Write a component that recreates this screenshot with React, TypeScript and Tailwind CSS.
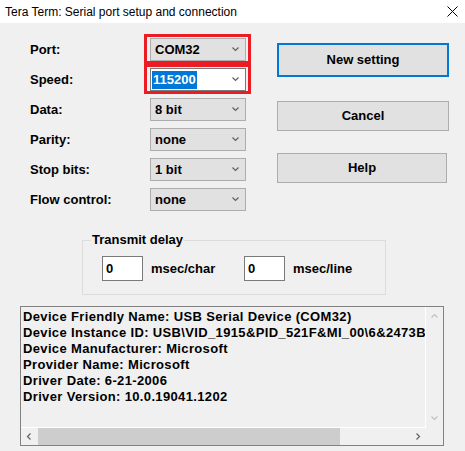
import React from 'react'

const font = { fontFamily: '"Liberation Sans", Arial, sans-serif' }

const Chevron: React.FC<{ dir?: 'down' | 'up' | 'left' | 'right'; color?: string }> = ({ dir = 'down', color = '#606060' }) => {
  const paths: Record<string, string> = {
    down: 'M0.5 1.5 L3.5 4.5 L6.5 1.5',
    up: 'M0.5 4.5 L3.5 1.5 L6.5 4.5',
    left: 'M4.5 0.5 L1.5 3.5 L4.5 6.5',
    right: 'M2.5 0.5 L5.5 3.5 L2.5 6.5',
  }
  return (
    <svg width="7" height="7" viewBox="0 0 7 7" className="shrink-0">
      <path d={paths[dir]} fill="none" stroke={color} strokeWidth="1.2" />
    </svg>
  )
}

interface ComboProps {
  value: string
  selected?: boolean
  marked?: boolean
}

const Combo: React.FC<ComboProps> = ({ value, selected, marked }) => (
  <div className="relative">
    <div
      className={
        selected
          ? 'flex items-center justify-between w-[96px] h-[23px] bg-white border border-[#7a7a7a] pl-[1px] pr-[6px]'
          : 'flex items-center justify-between w-[96px] h-[23px] bg-[#e1e1e1] border border-[#adadad] pl-[4px] pr-[6px]'
      }
    >
      {selected ? (
        <span className="bg-[#0078d7] text-white text-[13px] font-bold leading-[18px] px-[1px]">{value}</span>
      ) : (
        <span className="text-[13px] font-bold text-black">{value}</span>
      )}
      <Chevron />
    </div>
    {/* red annotation box */}
    {marked && (
      <div className="absolute -left-[6px] -top-[4px] w-[107px] h-[30px] border-[3px] border-[#ec1c24] pointer-events-none" />
    )}
  </div>
)

const rows: { label: string; value: string; selected?: boolean; marked?: boolean }[] = [
  { label: 'Port:', value: 'COM32', marked: true },
  { label: 'Speed:', value: '115200', selected: true, marked: true },
  { label: 'Data:', value: '8 bit' },
  { label: 'Parity:', value: 'none' },
  { label: 'Stop bits:', value: '1 bit' },
  { label: 'Flow control:', value: 'none' },
]

const infoLines = [
  'Device Friendly Name: USB Serial Device (COM32)',
  'Device Instance ID: USB\\VID_1915&PID_521F&MI_00\\6&2473B2B&0&0000',
  'Device Manufacturer: Microsoft',
  'Provider Name: Microsoft',
  'Driver Date: 6-21-2006',
  'Driver Version: 10.0.19041.1202',
]

export default function App() {
  return (
    <div className="w-[465px] h-[451px] bg-[#f0f0f0] overflow-hidden text-black" style={font}>
      {/* Title bar */}
      <div className="flex items-center justify-between h-[23px] bg-white pl-[5px] pr-[7px]">
        <span className="text-[12px] text-black">Tera Term: Serial port setup and connection</span>
        <svg width="11" height="11" viewBox="0 0 11 11">
          <path d="M0.5 0.5 L10.5 10.5 M10.5 0.5 L0.5 10.5" stroke="#000" strokeWidth="1" />
        </svg>
      </div>

      {/* Settings + buttons */}
      <div className="flex pt-[15px]">
        <div className="flex flex-col gap-[7px] pl-[30px]">
          {rows.map((r) => (
            <div key={r.label} className="flex items-center h-[23px]">
              <span className="w-[120px] text-[13px] font-bold">{r.label}</span>
              <Combo value={r.value} selected={r.selected} marked={r.marked} />
            </div>
          ))}
        </div>

        <div className="flex flex-col ml-[31px] pt-[5px]">
          <button className="w-[172px] h-[34px] bg-[#e1e1e1] border-2 border-[#0078d7] text-[13px] font-bold">
            New setting
          </button>
          <button className="mt-[24px] w-[172px] h-[30px] bg-[#e1e1e1] border border-[#adadad] text-[13px] font-bold">
            Cancel
          </button>
          <button className="mt-[22px] w-[170px] h-[30px] bg-[#e1e1e1] border border-[#adadad] text-[13px] font-bold">
            Help
          </button>
        </div>
      </div>

      {/* Transmit delay group */}
      <div className="relative ml-[82px] mt-[29px] w-[304px] h-[55px] border border-[#dcdcdc]">
        <span className="absolute left-[8px] -top-[9px] bg-[#f0f0f0] px-[1px] text-[13px] font-bold leading-[16px]">
          Transmit delay
        </span>
        <div className="flex items-center pl-[19px] pt-[15px]">
          <div className="w-[41px] h-[25px] bg-white border border-[#7a7a7a] pl-[3px] flex items-center text-[13px] font-bold">
            0
          </div>
          <span className="w-[101px] pl-[8px] text-[13px] font-bold">msec/char</span>
          <div className="w-[41px] h-[25px] bg-white border border-[#7a7a7a] pl-[3px] flex items-center text-[13px] font-bold">
            0
          </div>
          <span className="pl-[8px] text-[13px] font-bold">msec/line</span>
        </div>
      </div>

      {/* Device info box */}
      <div className="ml-[20px] mt-[11px] w-[424px] h-[140px] border border-[#828282] flex flex-col">
        <div className="flex flex-1 min-h-0">
          <div className="flex-1 min-w-0 overflow-hidden pl-[2px] pt-[2px] border-r border-b border-white">
            {infoLines.map((l) => (
              <div key={l} className="text-[13px] font-bold leading-[16px] tracking-[0.35px] whitespace-nowrap">
                {l}
              </div>
            ))}
          </div>
          <div className="w-[17px] flex flex-col items-center justify-between py-[6px]">
            <Chevron dir="up" color="#c0c0c0" />
            <Chevron dir="down" color="#c0c0c0" />
          </div>
        </div>
        <div className="flex h-[17px]">
          <div className="flex flex-1 items-center">
            <div className="w-[17px] flex justify-center">
              <Chevron dir="left" color="#606060" />
            </div>
            <div className="flex-1 h-full">
              <div className="w-[302px] h-full bg-[#cdcdcd]" />
            </div>
            <div className="w-[17px] flex justify-center">
              <Chevron dir="right" color="#606060" />
            </div>
          </div>
          <div className="w-[17px]" />
        </div>
      </div>
    </div>
  )
}
